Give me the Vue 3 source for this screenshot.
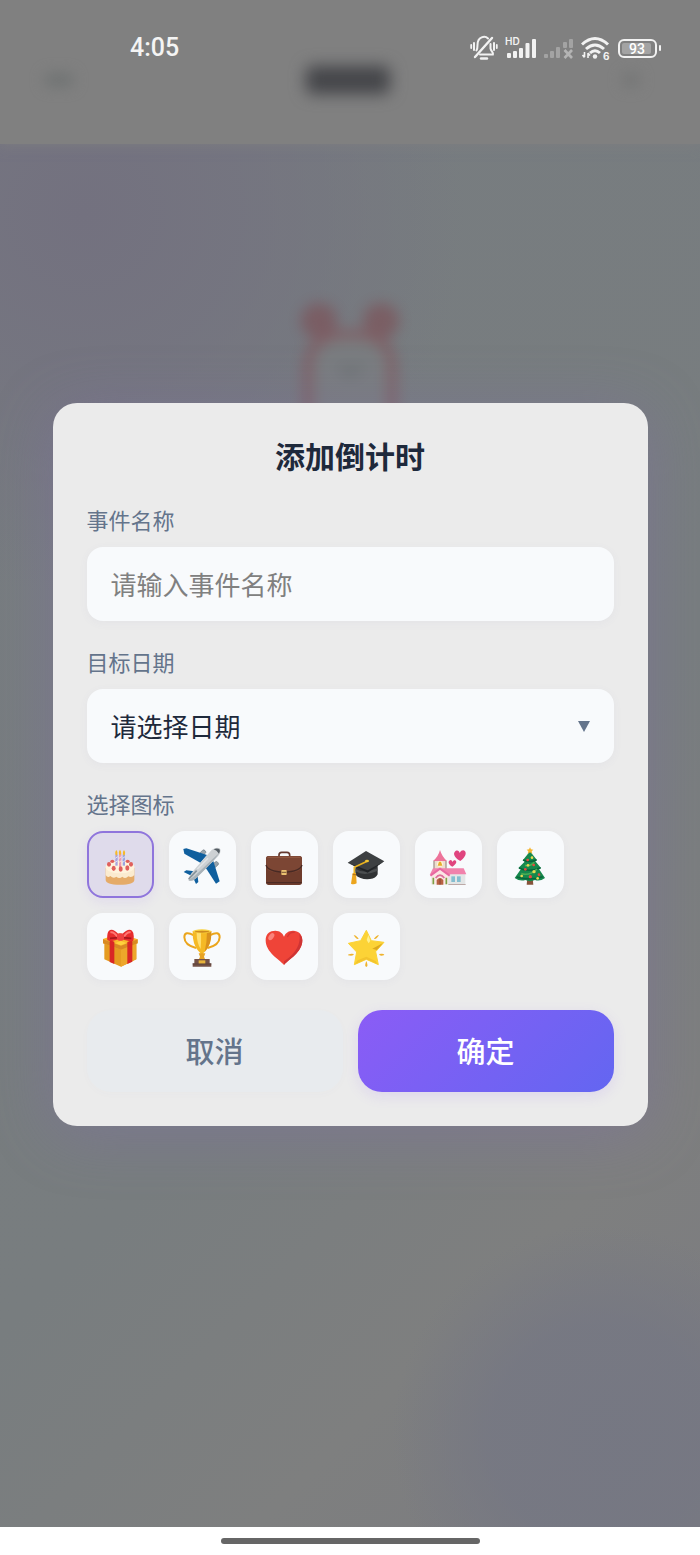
<template>
  <div class="screen">
    <div class="stage">
      <!-- page behind the modal -->
      <div class="page" aria-hidden="true">
        <div class="page-header">
          <span class="nav-mark"></span>
          <span class="nav-title"></span>
          <span class="nav-mark small"></span>
        </div>
        <div class="page-body">
          <svg class="clock" viewBox="0 0 120 130" width="120" height="130">
            <circle cx="29" cy="29" r="18" fill="#7d4c52" />
            <circle cx="91" cy="29" r="18" fill="#7d4c52" />
            <path d="M18 130 V76 Q18 42 60 42 Q102 42 102 76 V130" fill="#7c7f80" stroke="#854f55" stroke-width="9" />
            <path d="M50 74 L60 82 L72 74" fill="none" stroke="#666b6d" stroke-width="6" />
          </svg>
        </div>
      </div>

      <div class="overlay">
        <form class="modal" role="dialog" aria-labelledby="modal-title" @submit.prevent>
          <h2 id="modal-title" class="modal-title">添加倒计时</h2>

          <div class="form-item">
            <label class="form-label" for="event-name">事件名称</label>
            <input id="event-name" v-model="form.name" class="field" type="text" placeholder="请输入事件名称" />
          </div>

          <div class="form-item">
            <label class="form-label" for="event-date">目标日期</label>
            <div class="picker">
              <select id="event-date" v-model="form.date" class="field">
                <option value="">请选择日期</option>
              </select>
              <svg class="arrow" viewBox="0 0 12 12" width="12" height="12" aria-hidden="true">
                <path d="M0 1 H12 L6 12 Z" fill="#64748b" />
              </svg>
            </div>
          </div>

          <fieldset class="icon-group">
            <legend class="form-label">选择图标</legend>
            <div class="icon-list">
              <label
                v-for="icon in icons"
                :key="icon.name"
                class="icon-item"
                :class="{ active: form.icon === icon.name }"
              >
                <input v-model="form.icon" type="radio" name="icon" :value="icon.name" :aria-label="icon.name" />
                <svg viewBox="0 0 114 114" aria-hidden="true" v-html="icon.svg"></svg>
              </label>
            </div>
          </fieldset>

          <div class="actions">
            <button type="button" class="btn btn-cancel" @click="resetForm">取消</button>
            <button type="submit" class="btn btn-confirm">确定</button>
          </div>
        </form>
      </div>

      <div class="status-bar">
        <span class="time">4:05</span>
        <div class="status-icons">
          <svg width="28" height="26" viewBox="0 0 28 26" fill="none" stroke="#f2f2f2" stroke-width="2" stroke-linecap="round">
            <path d="M10 19.500 H23 C24 18 21 16.500 20.500 13.500 V9" />
            <path d="M6.500 15.500 Q7.500 14 7.500 10 C7.500 1.500 15 0.500 18 3.500" />
            <path d="M5 22 L22 3" stroke-width="2.400" />
            <path d="M11 23.500 H17" stroke-width="2.400" />
            <path d="M4 8 V15 M24 8 V15" />
            <path d="M1.200 10 V13 M26.800 10 V13" stroke-width="1.800" />
          </svg>
          <svg width="32" height="26" viewBox="0 0 32 26" fill="#f2f2f2">
            <text x="0" y="10" class="hd">HD</text>
            <rect x="2" y="18" width="4" height="5" rx="1" />
            <rect x="8" y="16" width="4" height="7" rx="1" />
            <rect x="14" y="13" width="4" height="10" rx="1" />
            <rect x="20.500" y="8" width="4" height="15" rx="1" />
            <rect x="27" y="4" width="4" height="19" rx="1" />
          </svg>
          <svg width="30" height="26" viewBox="0 0 30 26" fill="#a3a3a3">
            <rect x="0" y="19" width="4" height="4" rx="1" />
            <rect x="6" y="16" width="4" height="7" rx="1" />
            <rect x="12" y="12" width="4" height="11" rx="1" />
            <rect x="19" y="7" width="4" height="6" rx="1" />
            <rect x="25" y="4" width="4" height="9" rx="1" />
            <path d="M20.500 15 L28 23 M28 15 L20.500 23" stroke="#b4b4b4" stroke-width="2.600" />
          </svg>
          <svg width="30" height="26" viewBox="0 0 30 26" fill="none" stroke="#f2f2f2" stroke-width="3">
            <path d="M1 9.500 Q14 -2.500 27 9.500" />
            <path d="M5 14 Q14 6 23 14" />
            <path d="M9 18 Q14 13.500 19 18" />
            <circle cx="14" cy="21.500" r="2.200" fill="#f2f2f2" stroke="none" />
            <path d="M3.500 17 V22 M1.500 20 L3.500 22.500 M7 23 V18 M7 18 L9 20.500" stroke-width="1.600" />
            <text x="22" y="25" class="six">6</text>
          </svg>
          <svg width="44" height="26" viewBox="0 0 44 26">
            <rect x="1" y="5" width="37" height="17" rx="5" fill="none" stroke="#f2f2f2" stroke-width="2" />
            <rect x="4" y="8" width="29" height="11" rx="2" fill="#a3a3a3" />
            <rect x="41" y="10" width="2" height="6" rx="1" fill="#f2f2f2" />
            <text x="19" y="19" text-anchor="middle" class="level">93</text>
          </svg>
        </div>
      </div>
    </div>

    <div class="home-bar"><span></span></div>
  </div>
</template>

<script setup>
import { reactive } from 'vue'

const form = reactive({
  name: '',
  date: '',
  icon: 'cake'
})

const resetForm = () => {
  form.name = ''
  form.date = ''
  form.icon = 'cake'
}

const icons = [
  {
    name: 'cake',
    svg: `
      <path d="M14 62 V98 Q14 113 57 113 Q100 113 100 98 V62 Z" fill="#e5ab68"/>
      <path d="M14 60 V84 Q20 94 28 87 Q37 96 46 89 Q55 97 64 89 Q73 97 82 88 Q92 94 100 84 V60 Z" fill="#fbebcf"/>
      <ellipse cx="57" cy="60" rx="43" ry="19" fill="#fff3dc"/>
      <path d="M43 22 H50 V56 H43 Z" fill="#a9a3dd"/><path d="M54 18 H61 V60 H54 Z" fill="#ee9bb0"/><path d="M65 22 H72 V56 H65 Z" fill="#9aa5e0"/>
      <path d="M43 34 L50 29 M54 34 L61 29 M65 34 L72 29 M43 46 L50 41 M54 46 L61 41 M65 46 L72 41" stroke="#fff" stroke-width="2"/>
      <path d="M46 9 Q53 19 46 26 Q39 19 46 9 M57 8 Q64 18 57 25 Q50 18 57 8 M69 9 Q76 19 69 26 Q62 19 69 9" fill="#f7b928"/>
      <g fill="#e0605c"><ellipse cx="34" cy="43" rx="6" ry="5"/><ellipse cx="80" cy="43" rx="6" ry="5"/><ellipse cx="24" cy="52" rx="6" ry="7"/><ellipse cx="90" cy="52" rx="6" ry="7"/><ellipse cx="38" cy="64" rx="6" ry="8"/><ellipse cx="59" cy="66" rx="6" ry="8"/><ellipse cx="79" cy="63" rx="6" ry="8"/></g>`
  },
  {
    name: 'plane',
    svg: `
      <g fill="#98a5ae" stroke="#6c7981" stroke-width="2"><rect x="50" y="12" width="19" height="12" rx="5" transform="rotate(-42 59 18)"/><rect x="88" y="47" width="19" height="12" rx="5" transform="rotate(-42 97 53)"/></g>
      <path d="M1 6 L10 4 L72 24 L52 47 L4 20 Z" fill="#0f5f9e"/>
      <path d="M91 42 L110 103 L99 110 L67 61 Z" fill="#0f5f9e"/>
      <path d="M2 75 L10 70 L34 73 L25 86 Z M43 82 L46 105 L39 111 L29 89 Z" fill="#0f5f9e"/>
      <path d="M86 9 Q100 -2 110 4 Q117 12 106 27 L39 94 Q26 106 16 99 Q18 86 31 71 Z" fill="#cdd1d4"/>
      <path d="M109 17 Q105 29 39 94 Q26 106 16 99 Q30 93 47 76 Z" fill="#a9b2b8"/>
      <path d="M92 7 Q101 2 109 6 Q114 13 108 20 Q101 10 92 7" fill="#545d64"/>
      <path d="M17 96 L41 71" stroke="#87939b" stroke-width="5"/>
      <path d="M43 66 L75 34" stroke="#e2e5e7" stroke-width="4"/>`
  },
  {
    name: 'briefcase',
    svg: `
      <path d="M42 31 V24 Q42 16 50 16 H66 Q74 16 74 24 V31" fill="none" stroke="#65392f" stroke-width="5"/>
      <rect x="3" y="27" width="108" height="87" rx="8" fill="#6e3c2c"/>
      <path d="M3 36 Q3 27 12 27 H102 Q111 27 111 36 V57 Q111 77 57 79 Q3 77 3 57 Z" fill="#7c4634"/>
      <path d="M3 54 Q8 73 57 76 Q106 73 111 54" fill="none" stroke="#482a24" stroke-width="4"/>
      <path d="M8 31 H106" stroke="#935944" stroke-width="3"/>
      <path d="M4 107 H110" stroke="#4d2b24" stroke-width="4"/>
      <rect x="49" y="69" width="16" height="15" rx="2" fill="#eac170"/><path d="M50 76 H64" stroke="#795438" stroke-width="3"/>`
  },
  {
    name: 'graduation',
    svg: `
      <path d="M25 57 V83 Q41 99 69 96 Q87 94 92 82 V54 Z" fill="#303234"/>
      <path d="M25 65 Q50 82 91 64 V72 Q51 89 25 73 Z" fill="#4b4e50"/>
      <path d="M2 47 L57 12 L112 43 L62 75 Z" fill="#3d4042"/>
      <path d="M2 47 L62 70 L112 43 L62 77 Z" fill="#202326"/>
      <path d="M62 42 L22 61 V83" fill="none" stroke="#e9b21e" stroke-width="5"/>
      <path d="M17 78 H27 L29 109 Q20 114 12 110 Z" fill="#eca51d"/>
      <path d="M17 83 H27" stroke="#a96c1d" stroke-width="3"/>
      <ellipse cx="60" cy="42" rx="6" ry="4" fill="#f2c431"/>`
  },
  {
    name: 'wedding',
    svg: `
      <path d="M14 40 H52 V72 H14 Z" fill="#eeddce"/>
      <path d="M15 42 V66 M51 42 V66" stroke="#8f7f78" stroke-width="3"/>
      <path d="M33 9 Q39 29 54 42 H12 Q28 29 33 9" fill="#ed739a"/>
      <circle cx="33" cy="51" r="9" fill="#fff5d8"/><path d="M26 56 L30 44 H36 L40 56 Z" fill="#e8ad2b"/>
      <rect x="7" y="80" width="102" height="32" fill="#e3e6e6"/>
      <path d="M12 64 H104 L112 82 H3 Z" fill="#f182ac"/>
      <path d="M8 112 V84 L33 67 L58 84 V112 Z" fill="#fbe6e4"/>
      <path d="M4 86 L33 65 L62 86" fill="none" stroke="#e868a1" stroke-width="6"/>
      <path d="M20 93 Q33 76 46 93" fill="none" stroke="#dc6f9c" stroke-width="5"/>
      <path d="M23 113 V99 Q33 87 43 99 V113 Z" fill="#b86142"/><path d="M33 95 V113" stroke="#6d3c31" stroke-width="2"/>
      <g fill="#85bed0"><rect x="67" y="88" width="11" height="17"/><rect x="84" y="88" width="11" height="17"/></g>
      <path d="M13 92 V112 M52 92 V112" stroke="#7ca146" stroke-width="5"/>
      <path d="M58 113 H110" stroke="#b29c98" stroke-width="3"/>
      <path d="M94 42 C80 35 71 22 77 15 C83 7 91 11 92 18 C98 6 109 9 110 17 C111 27 101 36 94 42" fill="#e0457f"/>
      <path d="M70 59 C60 53 56 45 61 41 C66 37 69 41 70 45 C74 38 81 39 82 45 C82 50 75 56 70 59" fill="#e0457f"/>`
  },
  {
    name: 'tree',
    svg: `
      <path d="M49 92 H65 L67 113 H47 Z" fill="#86543b"/>
      <path d="M57 13 L77 38 L73 43 L90 63 L84 66 L102 93 Q87 104 72 99 Q57 106 43 99 Q27 104 11 93 L30 66 L22 63 L41 44 L36 39 Z" fill="#16884d"/>
      <path d="M36 39 Q56 48 77 38 M24 63 Q54 77 89 62 M17 90 Q56 102 95 89" fill="none" stroke="#08653b" stroke-width="5"/>
      <path d="M42 55 Q59 59 70 46 M31 80 Q57 87 78 66" fill="none" stroke="#49ad53" stroke-width="5"/>
      <path d="M57 1 L60 7 L67 8 L62 13 L64 20 L57 16 L50 20 L52 13 L47 8 L54 7 Z" fill="#f5b631"/>
      <g fill="#e94a3f"><circle cx="50" cy="39" r="4"/><circle cx="68" cy="54" r="4"/><circle cx="43" cy="67" r="4"/><circle cx="58" cy="89" r="5"/><circle cx="84" cy="83" r="4"/></g>
      <g fill="#e7da52"><circle cx="63" cy="32" r="4"/><circle cx="51" cy="55" r="4"/><circle cx="69" cy="74" r="5"/><circle cx="32" cy="87" r="4"/><circle cx="80" cy="94" r="4"/></g>`
  },
  {
    name: 'gift',
    svg: `
      <path d="M10 40 L60 60 L106 40 V91 L60 113 L10 91 Z" fill="#e59b21"/>
      <path d="M60 57 L106 39 V91 L60 113 Z" fill="#eda62a"/>
      <path d="M6 30 L56 13 L110 31 V43 L60 62 L6 43 Z" fill="#f7b92d"/>
      <path d="M6 31 L60 50 L110 31 V43 L60 62 L6 43 Z" fill="#d98923"/>
      <path d="M60 36 L76 42 L60 49 L43 42 Z" fill="#ffd13d"/>
      <path d="M26 33 L40 38 V105 L26 99 Z M79 39 L94 33 V98 L79 105 Z" fill="#d92725"/>
      <path d="M58 28 Q33 41 19 34 Q17 12 24 5 Q35 -4 54 17 Z M58 28 Q82 41 97 35 Q101 13 93 5 Q82 -4 62 17 Z" fill="#e72d2d"/>
      <path d="M28 10 Q38 7 49 23 M89 10 Q79 7 69 23" fill="none" stroke="#ff7772" stroke-width="6"/>
      <path d="M27 28 L52 26 M91 28 L67 26" stroke="#a8181d" stroke-width="5"/>
      <rect x="48" y="13" width="21" height="22" rx="8" fill="#ef4140"/>`
  },
  {
    name: 'trophy',
    svg: `
      <path d="M33 19 Q4 4 4 25 Q5 49 39 57 M80 19 Q110 4 110 25 Q109 49 74 57" fill="none" stroke="#eba51c" stroke-width="6"/>
      <path d="M29 6 H85 Q86 48 67 67 L61 72 V92 H52 V72 L47 67 Q28 48 29 6" fill="#f5b925"/>
      <path d="M72 7 H85 Q86 48 65 68 Q72 40 72 7" fill="#d9911d"/>
      <path d="M41 12 Q41 42 53 60 Q55 37 54 12" fill="#ffdf70"/>
      <ellipse cx="57" cy="7" rx="28" ry="6" fill="#f9d13f"/><ellipse cx="57" cy="8" rx="22" ry="3" fill="#cf8a1f"/>
      <path d="M47 73 H67 L63 83 L67 92 H47 L51 83 Z" fill="#e7a323"/>
      <path d="M34 90 H80 V103 H85 V113 H29 V103 H34 Z" fill="#735147"/>
      <rect x="47" y="94" width="20" height="10" fill="#e8b33b"/><path d="M29 105 H85" stroke="#533b35" stroke-width="2"/>`
  },
  {
    name: 'heart',
    svg: `
      <path d="M57 108 C42 91 2 70 2 34 C2 13 15 5 31 5 C45 5 54 14 57 23 C60 14 69 5 84 5 C101 5 112 16 112 34 C112 70 72 91 57 108" fill="#ef4438"/>
      <path d="M103 14 Q111 60 57 97 L57 108 C72 91 112 70 112 34 Q112 22 103 14" fill="#cf3434"/>
      <path d="M67 24 Q74 8 89 10" fill="none" stroke="#d63835" stroke-width="4"/>
      <ellipse cx="19" cy="23" rx="7" ry="12" transform="rotate(35 19 23)" fill="#fa837b"/>`
  },
  {
    name: 'star',
    svg: `
      <path d="M58 4 L73 35 L111 40 L86 68 L94 107 L58 91 L22 107 L29 69 L4 43 L41 35 Z" fill="#fcd336" stroke="#fcd336" stroke-width="3" stroke-linejoin="round"/>
      <path d="M64 18 L70 35 L65 43 L59 33 Z" fill="#fff08c"/>
      <path d="M76 59 L108 42 L89 63 Z" fill="#dda81e"/>
      <path d="M32 94 L58 83 L86 96 L92 106 L58 91 L23 106 Z" fill="#f3c42d"/>
      <g fill="#efb32d"><path d="M20 19 Q26 16 35 29 Q29 33 20 19 M96 19 Q90 16 81 29 Q87 33 96 19 M3 79 Q4 73 21 75 Q19 83 3 79 M112 78 Q111 72 96 75 Q98 83 112 78 M58 96 Q65 112 58 114 Q51 112 58 96"/></g>`
  }
]
</script>

<style>
body {
  margin: 0;
}
</style>

<style scoped>
.screen {
  display: flex;
  flex-direction: column;
  min-height: 100vh;
  background: #fff;
  font-family: "Noto Sans CJK SC", "Noto Sans", sans-serif;
}

.stage {
  position: relative;
  display: grid;
  flex: 1;
  overflow: hidden;
}

.page,
.overlay {
  grid-area: 1 / 1;
  min-width: 0;
}

.page {
  background:
    radial-gradient(circle at 86% 94%, rgba(117, 119, 131, 0.9) 0, rgba(117, 119, 131, 0.8) 110px, transparent 210px),
    radial-gradient(circle at 12% 14%, #73717f 0, rgba(116, 115, 128, 0.8) 160px, transparent 380px),
    linear-gradient(135deg, #777c80 0%, #787d7f 60%, #7e7f7f 80%, #7b7b80 100%);
}

.page-header {
  display: flex;
  align-items: center;
  justify-content: space-between;
  box-sizing: border-box;
  height: 144px;
  padding: 16px 60px 0 44px;
  background: #808080;
  box-shadow: 0 0 12px #7e7e80;
}

.nav-mark {
  width: 30px;
  height: 14px;
  border-radius: 7px;
  background: #707373;
  filter: blur(7px);
}

.nav-mark.small {
  width: 18px;
  background: #747575;
}

.nav-title {
  width: 84px;
  height: 28px;
  border-radius: 6px;
  background: #444549;
  filter: blur(8px);
}

.page-body {
  display: flex;
  justify-content: center;
  padding-top: 148px;
}

.clock {
  filter: blur(7px);
  opacity: 0.6;
}

.overlay {
  position: relative;
  display: flex;
  align-items: center;
  justify-content: center;
  padding-top: 2px;
}

.status-bar {
  position: absolute;
  top: 0;
  left: 0;
  right: 0;
  display: flex;
  align-items: center;
  justify-content: space-between;
  padding: 32px 38px 0 130px;
  color: #f4f4f4;
}

.time {
  font: 500 25px/32px Roboto, sans-serif;
}

.status-icons {
  display: flex;
  align-items: center;
  gap: 7px;
}

.hd {
  font: 600 10px Inter, sans-serif;
}

.six {
  font: 700 10px Inter, sans-serif;
  fill: #f2f2f2;
  stroke: none;
}

.level {
  font: 500 14px Roboto, sans-serif;
  fill: #fff;
}

.modal {
  box-sizing: border-box;
  width: 85%;
  padding: 34px;
  border-radius: 24px;
  background: #ebebeb;
  box-shadow: 0 8px 60px rgba(128, 108, 176, 0.34);
}

.modal-title {
  margin: 0 0 30px;
  color: #1e293b;
  font-size: 30px;
  font-weight: 700;
  line-height: 36px;
  padding-bottom: 2px;
  text-align: center;
}

.form-item {
  margin-bottom: 26px;
}

.form-label {
  display: block;
  margin-bottom: 14px;
  padding: 0;
  color: #64748b;
  font-size: 22px;
  line-height: 28px;
}

.field {
  display: block;
  box-sizing: border-box;
  width: 100%;
  height: 74px;
  padding: 0 24px 2px;
  border: 0;
  border-radius: 16px;
  outline: 0;
  appearance: none;
  background: #f8fafc;
  box-shadow: 0 2px 10px rgba(100, 90, 160, 0.05);
  color: #1e293b;
  font-family: inherit;
  font-size: 26px;
}

.field::placeholder {
  color: #808080;
  opacity: 1;
}

.picker {
  position: relative;
}

.arrow {
  position: absolute;
  top: 31px;
  right: 24px;
  pointer-events: none;
}

.icon-group {
  min-width: 0;
  margin: 0;
  padding: 0;
  border: 0;
}

.icon-list {
  display: flex;
  flex-wrap: wrap;
  gap: 15px;
}

.icon-item {
  position: relative;
  display: flex;
  align-items: center;
  justify-content: center;
  box-sizing: border-box;
  width: 67px;
  height: 67px;
  border: 2px solid transparent;
  border-radius: 16px;
  background: #f8fafc;
  background-clip: border-box;
  box-shadow: 0 2px 8px rgba(100, 90, 160, 0.05);
  cursor: pointer;
}

.icon-item.active {
  border-color: #8f75dc;
  background: #dfdbeb;
  box-shadow: 0 4px 12px rgba(139, 92, 246, 0.1);
}

.icon-item input {
  position: absolute;
  inset: 0;
  margin: 0;
  opacity: 0;
}

.icon-item svg {
  width: 38px;
  height: 38px;
  padding-top: 2px;
}

.actions {
  display: flex;
  gap: 15px;
  margin-top: 30px;
}

.btn {
  flex: 1;
  height: 82px;
  padding: 0 0 2px;
  border: 0;
  border-radius: 24px;
  font-family: inherit;
  font-size: 29px;
  font-weight: 500;
  cursor: pointer;
}

.btn-cancel {
  background: #e8ebee;
  box-shadow: 0 2px 10px rgba(100, 116, 139, 0.02);
  color: #64748b;
}

.btn-confirm {
  background: linear-gradient(135deg, #8b5cf6, #6366f1);
  box-shadow: 0 4px 14px rgba(139, 92, 246, 0.14);
  color: #fff;
}

.home-bar {
  display: flex;
  align-items: center;
  justify-content: center;
  height: 28px;
}

.home-bar span {
  width: 37%;
  height: 6px;
  border-radius: 3px;
  background: #666;
}
</style>
